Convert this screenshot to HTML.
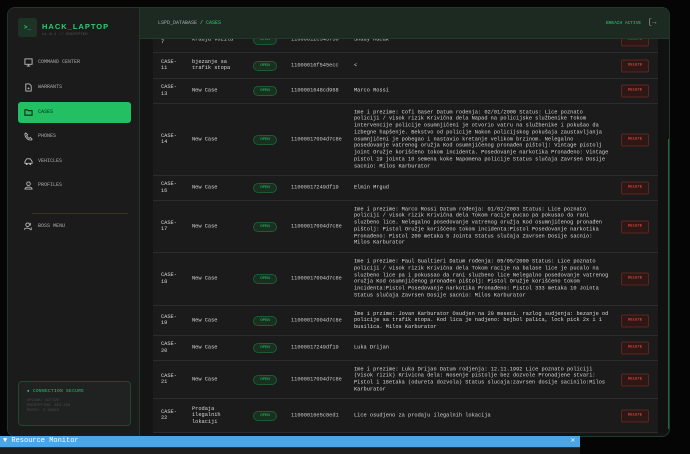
<!DOCTYPE html><html><head><meta charset="utf-8"><style>
*{margin:0;padding:0;box-sizing:border-box}
body{width:690px;height:454px;background:#050505;overflow:hidden;position:relative;font-family:"Liberation Mono",monospace;color:#cfcfcf}
.win{position:absolute;left:7px;top:7px;width:663px;height:430px;background:#141414;border:1px solid #1f3a2a;border-radius:8px;overflow:hidden}
.side{position:absolute;left:0;top:0;width:132px;height:430px;background:#1b1b1b;border-right:1px solid #1f3a2a}
.logo{position:absolute;left:10px;top:10px;width:19px;height:19px;background:#1c3426;border-radius:3px;color:#2ecc71;font-size:6px;font-weight:bold;line-height:19px;text-align:center}
.t1{position:absolute;left:34px;top:14px;font-family:"Liberation Sans",sans-serif;font-weight:bold;font-size:7.5px;letter-spacing:1px;color:#2ecc71}
.t2{position:absolute;left:34px;top:25px;font-size:4px;color:#555}
.nav{position:absolute;left:10px;width:113px;height:21px;font-size:5px;color:#aaa;line-height:21px;padding-left:20px}
.nav svg{position:absolute;left:6px;top:6px}
.nav.act{background:#22c063;border-radius:3px;color:#0d2a18}
.div{position:absolute;left:24px;top:205px;width:96px;height:1px;background:#3a3220}
.conn{position:absolute;left:10px;top:373px;width:113px;height:45px;border:1px solid #1f4a30;border-radius:4px;background:#1f2220;padding:8px 8px;font-size:3.8px;color:#4a4a4a;line-height:5px}
.conn b{color:#2ecc71;font-weight:normal;font-size:4.2px;letter-spacing:.5px;display:block;margin-bottom:4px}
.head{position:absolute;left:132px;top:0;width:531px;height:31px;background:#1c2a22;border-bottom:1px solid #24382c;font-size:5px;line-height:31px;color:#aaa}
.tbl{position:absolute;left:145px;top:31px;width:505px;height:394px;overflow:hidden;background:#161616}
.row{position:absolute;left:0;width:505px;background:#1b1b1b;border-bottom:1px solid #2c2c2c;font-size:5.3px;line-height:6.8px;color:#d8d8d8}
.row>div{position:absolute;top:50%;transform:translateY(-50%)}
.c1{left:8px}.c2{left:39px}.c4{left:138px;color:#ccc}.c5{left:201px;width:250px;white-space:nowrap}
.pill{left:100px;width:24px;height:10px;border-radius:5px;background:#17301f;border:1px solid #1f5a35;color:#2ecc71;font-size:4px;line-height:8px;text-align:center}
.del{left:468px;width:28px;height:13px;background:#2e1816;border:1px solid #5a2620;border-radius:2px;color:#c8443a;font-size:4px;line-height:11px;text-align:center;font-weight:bold}
.sb{position:absolute;left:650px;top:31px;width:13px;height:394px;background:#111}
.sb i{position:absolute;left:10px;top:100px;width:2px;height:290px;background:#1f6a40}
.rm{position:absolute;left:0;top:436px;width:580px;height:11px;background:#4aa6e6;color:#fff;font-size:7px;line-height:11px;padding-left:3px}
.rm2{position:absolute;left:0;top:447px;width:580px;height:7px;background:#1d1d1d;border-top:1px solid #333}
</style></head><body>
<div class="win">
<div class="side">
<div class="logo">&gt;_</div><div class="t1">HACK_LAPTOP</div><div class="t2">v1.0.1 // ENCRYPTED</div>
<div class="nav" style="top:44px"><svg width="9" height="9" viewBox="0 0 10 10"><rect x="1" y="1" width="8" height="6" fill="none" stroke="#bbb" stroke-width="1"/><path d="M3 9h4M5 7v2" stroke="#bbb"/></svg>COMMAND CENTER</div>
<div class="nav" style="top:69px"><svg width="9" height="9" viewBox="0 0 10 10"><path d="M2 1h4l2 2v6H2z" fill="none" stroke="#bbb"/><path d="M5 5v2M4 6h2" stroke="#bbb"/></svg>WARRANTS</div>
<div class="nav act" style="top:94px"><svg width="9" height="9" viewBox="0 0 10 10"><path d="M1 2h3l1 1h4v5H1z" fill="none" stroke="#0d2a18" stroke-width="1.2"/></svg>CASES</div>
<div class="nav" style="top:118px"><svg width="9" height="9" viewBox="0 0 10 10"><path d="M2 1l2 2-1 1c1 2 2 3 3 3l1-1 2 2-1 1C4 9 1 6 1 2z" fill="none" stroke="#bbb"/></svg>PHONES</div>
<div class="nav" style="top:143px"><svg width="9" height="9" viewBox="0 0 10 10"><path d="M1 7V5l2-3h4l2 3v2z" fill="none" stroke="#bbb"/><circle cx="3" cy="8" r="1" fill="#bbb"/><circle cx="7" cy="8" r="1" fill="#bbb"/></svg>VEHICLES</div>
<div class="nav" style="top:167px"><svg width="9" height="9" viewBox="0 0 10 10"><circle cx="5" cy="3" r="2" fill="none" stroke="#bbb"/><path d="M1 9c0-3 8-3 8 0z" fill="none" stroke="#bbb"/></svg>PROFILES</div>
<div class="div"></div>
<div class="nav" style="top:208px"><svg width="9" height="9" viewBox="0 0 10 10"><circle cx="4" cy="3" r="2" fill="none" stroke="#bbb"/><path d="M0 9c0-3 7-3 7 0M7 1v3M8 6v3" fill="none" stroke="#bbb"/></svg>BOSS MENU</div>
<div class="conn"><b>● CONNECTION SECURE</b>UPLINK: ACTIVE<br>ENCRYPTION: AES-256<br>PROXY: 3 NODES</div>
</div>
<div class="head"><span style="position:absolute;left:18px">LSPD_DATABASE / <span style="color:#2ecc71">CASES</span></span><span style="position:absolute;left:466px;color:#2ecc71;font-size:4.5px">BREACH ACTIVE</span><span style="position:absolute;left:508px;font-size:7px">[→</span></div>
<div class="tbl">
<div class="row" style="top:-12px;height:26px"><div class="c1">CASE-<br>7</div><div class="c2">kradja vozila</div><div class="pill">OPEN</div><div class="c4">11000012e345f50</div><div class="c5">Shady Macak</div><div class="del">DELETE</div></div>
<div class="row" style="top:14px;height:26px"><div class="c1">CASE-<br>11</div><div class="c2">bjezanje sa<br>trafik stopa</div><div class="pill">OPEN</div><div class="c4">11000016f545ecc</div><div class="c5">&lt;</div><div class="del">DELETE</div></div>
<div class="row" style="top:40px;height:25px"><div class="c1">CASE-<br>13</div><div class="c2">New Case</div><div class="pill">OPEN</div><div class="c4">1100001648cd968</div><div class="c5">Marco Rossi</div><div class="del">DELETE</div></div>
<div class="row" style="top:65px;height:72px"><div class="c1">CASE-<br>14</div><div class="c2">New Case</div><div class="pill">OPEN</div><div class="c4">11000017004d7c8e</div><div class="c5">Ime i prezime: Cofi Gaser Datum rodenja: 02/01/2000 Status: Lice poznato<br>policiji / visok rizik Krivična dela Napad na policijske službenike Tokom<br>intervencije policije osumnjičeni je otvorio vatru na službenike i pokušao da<br>izbegne hapšenje. Bekstvo od policije Nakon policijskog pokušaja zaustavljanja<br>osumnjičeni je pobegao i nastavio kretanje velikom brzinom. Nelegalno<br>posedovanje vatrenog oružja Kod osumnjičenog pronađen pištolj: Vintage pistolj<br>joint Oružje korišćeno tokom incidenta. Posedovanje narkotika Pronađeno: Vintage<br>pistol 19 jointa 10 semena koke Napomena policije Status slučaja Zavrsen Dosije<br>sacnio: Milos Karburator</div><div class="del">DELETE</div></div>
<div class="row" style="top:137px;height:25px"><div class="c1">CASE-<br>16</div><div class="c2">New Case</div><div class="pill">OPEN</div><div class="c4">11000017249df19</div><div class="c5">Elmin Mrgud</div><div class="del">DELETE</div></div>
<div class="row" style="top:162px;height:52px"><div class="c1">CASE-<br>17</div><div class="c2">New Case</div><div class="pill">OPEN</div><div class="c4">11000017004d7c8e</div><div class="c5">Ime i prezime: Marco Rossi Datum rođenja: 01/02/2003 Status: Lice poznato<br>policiji / visok rizik Krivična dela Tokom racije pucao pa pokusao da rani<br>sluzbeno lice. Nelegalno posedovanje vatrenog oružja Kod osumnjičenog pronađen<br>pištolj: Pistol Oružje korišćeno tokom incidenta:Pistol Posedovanje narkotika<br>Pronađeno: Pistol 200 metaka 5 Jointa Status slučaja Zavrsen Dosije sacnio:<br>Milos Karburator</div><div class="del">DELETE</div></div>
<div class="row" style="top:214px;height:53px"><div class="c1">CASE-<br>18</div><div class="c2">New Case</div><div class="pill">OPEN</div><div class="c4">11000017004d7c8e</div><div class="c5">Ime i prezime: Paul Gualtieri Datum rođenja: 05/05/2000 Status: Lice poznato<br>policiji / visok rizik Krivična dela Tokom racije na balase lice je pucalo na<br>sluzbeno lice pa i pokussao da rani sluzbeno lice Nelegalno posedovanje vatrenog<br>oružja Kod osumnjičenog pronađen pištolj: Pistol Oružje korišćeno tokom<br>incidenta:Pistol Posedovanje narkotika Pronađeno: Pistol 333 metaka 10 Jointa<br>Status slučaja Zavrsen Dosije sacnio: Milos Karburator</div><div class="del">DELETE</div></div>
<div class="row" style="top:267px;height:30px"><div class="c1">CASE-<br>19</div><div class="c2">New Case</div><div class="pill">OPEN</div><div class="c4">11000017004d7c8e</div><div class="c5">Ime i przime: Jovan Karburator Osudjen na 20 meseci. razlog sudjenja: bezanje od<br>policije sa trafik stopa. Kod lica je nadjeno: bejbol palica, lock pick 2x i 1<br>busilica. Milos Karburator</div><div class="del">DELETE</div></div>
<div class="row" style="top:297px;height:25px"><div class="c1">CASE-<br>20</div><div class="c2">New Case</div><div class="pill">OPEN</div><div class="c4">11000017249df19</div><div class="c5">Luka Drijan</div><div class="del">DELETE</div></div>
<div class="row" style="top:322px;height:38px"><div class="c1">CASE-<br>21</div><div class="c2">New Case</div><div class="pill">OPEN</div><div class="c4">11000017004d7c8e</div><div class="c5">Ime i prezime: Luka Drijan Datum rodjenja: 12.11.1992 Lice poznato policiji<br>(Visok rizik) Krivicna dela: Nosenje pistolje bez dozvole Pronadjene stvari:<br>Pistol i 18etaka (odureta dozvola) Status slucaja:zavrsen dosije sacinilo:Milos<br>Karburator</div><div class="del">DELETE</div></div>
<div class="row" style="top:360px;height:34px"><div class="c1">CASE-<br>22</div><div class="c2">Prodaja<br>ilegalnih<br>lokaciji</div><div class="pill">OPEN</div><div class="c4">11000016e5c8ed1</div><div class="c5">Lice osudjeno za prodaju ilegalnih lokacija</div><div class="del">DELETE</div></div>
</div>
<div class="sb"><i></i></div>
</div>
<div class="rm">▼ Resource Monitor<span style="position:absolute;right:5px">✕</span></div>
<div class="rm2"></div>
</body></html>
